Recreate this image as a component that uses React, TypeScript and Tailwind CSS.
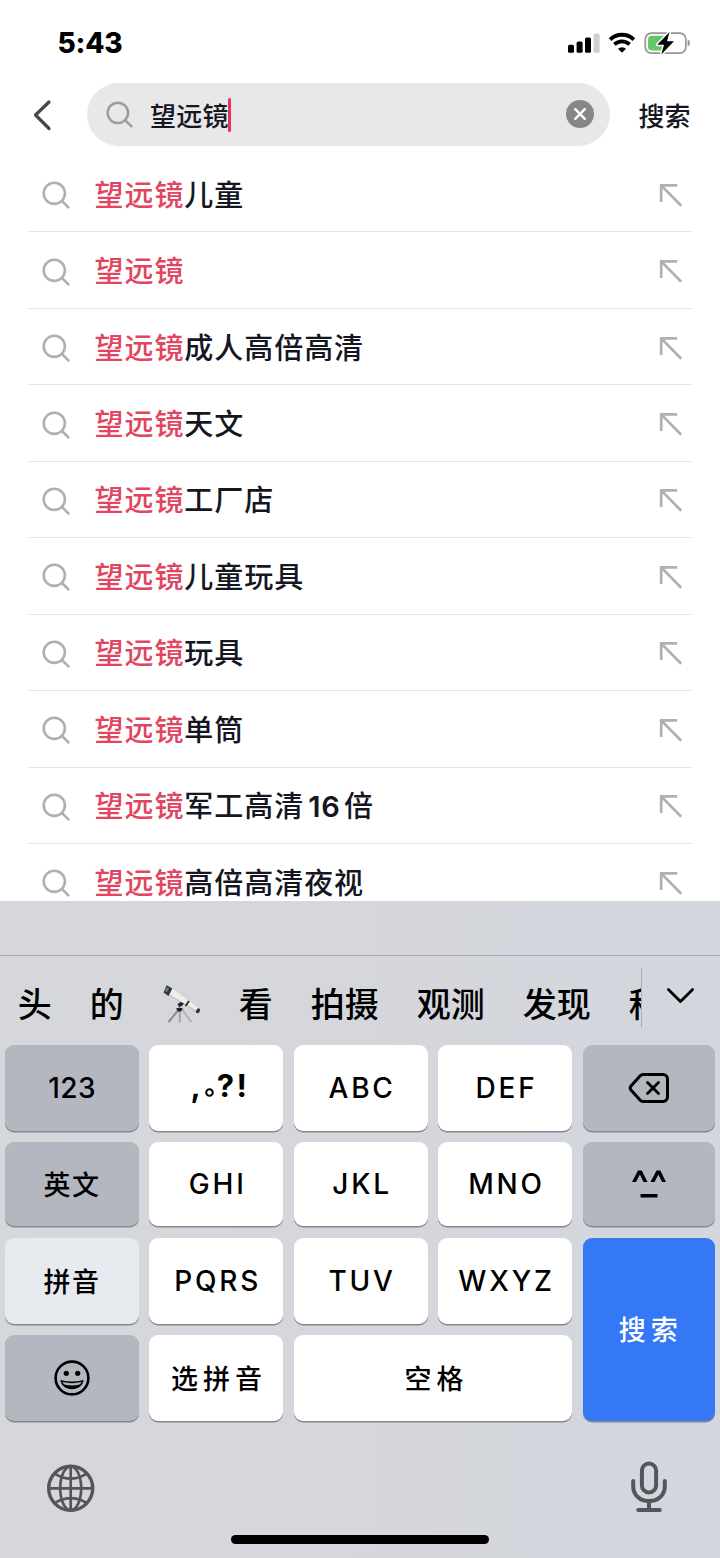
import type { ReactNode } from 'react';

const KEYWORD = '望远镜';

const SUGGESTIONS: ReactNode[] = [
  '儿童',
  '',
  '成人高倍高清',
  '天文',
  '工厂店',
  '儿童玩具',
  '玩具',
  '单筒',
  <>
    军工高清<span className="mr-[3.500px] ml-[4px] font-semibold tracking-[0.8px]">16</span>倍
  </>,
  '高倍高清夜视',
];

function SearchIcon({ className }: { className: string }) {
  return (
    <svg className={className} viewBox="0 0 28 28" fill="none" stroke="currentColor" strokeWidth="2.6" strokeLinecap="round">
      <circle cx="12.3" cy="12.3" r="10.6" />
      <path d="M20 20l6.400 6.400" />
    </svg>
  );
}

function StatusBar() {
  return (
    <div className="flex h-[83px] items-start justify-between pr-[29px] pl-[57.500px]">
      <div className="mt-[26px] font-['Inter'] text-[28px] leading-[34px] font-extrabold tracking-[-0.2px] text-black">5:43</div>
      <svg className="mt-[30px] h-[26px] w-[124px]" viewBox="0 0 124 26">
        <rect x="1" y="14.8" width="6" height="8" rx="1.6" />
        <rect x="9.6" y="11.6" width="6" height="11.2" rx="1.6" />
        <rect x="18" y="7.6" width="6" height="15.2" rx="1.6" />
        <rect x="26.6" y="3.4" width="6" height="19.4" rx="1.6" fill="#cfcfcf" />
        <g fill="none" stroke="#000" strokeWidth="4">
          <path d="M43.2 9.6a17 17 0 0 1 23.6 0" />
          <path d="M47.4 14.4a11 11 0 0 1 15.2 0" strokeWidth="3.8" />
        </g>
        <path d="M55 22.8l-4-4a5.8 5.8 0 0 1 8 0z" />
        <rect x="78.300" y="3.200" width="40.500" height="20" rx="6" fill="none" stroke="#969696" strokeWidth="1.700" />
        <path d="M85 5.8h12.5l-2 14.8H85a4 4 0 0 1-4-4V9.800a4 4 0 0 1 4-4z" fill="#65c766" />
        <path d="M120.600 9.600c3 .9 3 6.100 0 7z" fill="#969696" />
        <path d="M102.500 2L90.300 14.800h6.700L94.300 24.600 107 11.200h-7z" stroke="#fff" strokeWidth="3" strokeLinejoin="round" />
        <path d="M102.500 2L90.300 14.800h6.700L94.300 24.600 107 11.200h-7z" />
      </svg>
    </div>
  );
}

function SearchBar() {
  return (
    <div className="flex h-[63px] items-center">
      <svg className="ml-[32px] h-[32px] w-[20px] shrink-0" viewBox="0 0 20 32" fill="none" stroke="#45464c" strokeWidth="3.200" strokeLinecap="round" strokeLinejoin="round">
        <path d="M17 3L3.500 16 17 29.500" />
      </svg>
      <div className="ml-[35px] flex h-[63px] w-[523px] shrink-0 items-center rounded-full bg-[#e8e8e8] pr-[16px] pl-[19px]">
        <SearchIcon className="h-[27px] w-[27px] text-[#9d9d9d]" />
        <div className="ml-[17px] text-[26px] leading-[38px] font-medium tracking-[0.2px]">{KEYWORD}</div>
        <div className="ml-[-1px] h-[34px] w-[3px] rounded-full bg-[#ea3358]" />
        <svg className="mb-[2px] ml-auto h-[28px] w-[28px]" viewBox="0 0 28 28">
          <circle cx="14" cy="14" r="14" fill="#868686" />
          <path d="M9.200 9.200l9.600 9.600M18.800 9.200l-9.600 9.600" stroke="#fff" strokeWidth="2.400" strokeLinecap="round" />
        </svg>
      </div>
      <div className="ml-[28.500px] text-[26px] leading-[38px] font-medium">搜索</div>
    </div>
  );
}

function SuggestionRow({ rest }: { rest: ReactNode }) {
  return (
    <li className="mx-[28px] flex h-[76.450px] shrink-0 items-center border-b border-[#e4e4e6] pt-[2px] pr-[9px] pl-[14px]">
      <SearchIcon className="mt-[1px] h-[28px] w-[28px] text-[#b0b0b0]" />
      <div className="mt-[2px] ml-[24.500px] text-[29px] leading-[40px] font-medium tracking-[0.950px] whitespace-nowrap">
        <span className="text-[#e2455f]">{KEYWORD}</span>
        {rest}
      </div>
      <svg className="ml-auto h-[24px] w-[24px]" viewBox="0 0 24 24" fill="none" stroke="#b0b0b0" strokeWidth="2.700">
        <path d="M18.200 2.400H2.200V19M2.200 2.400l20 20.300" />
      </svg>
    </li>
  );
}

function TelescopeIcon() {
  return (
    <svg className="mt-[1px] h-[40px] w-[40px] shrink-0" viewBox="0 0 40 40">
      <g stroke="#8b8d90" strokeWidth="2" strokeLinecap="round">
        <path d="M15.500 27L7 37.500" />
        <path d="M17.800 27v10.500" stroke="#a3a5a8" />
        <path d="M20.500 26l8.500 11.500" stroke="#b0b2b5" />
      </g>
      <path d="M9 3.500L37 24.500l-2.500 4.500L5 10.500z" fill="#efeee8" />
      <path d="M6 9.500L35.500 27l-1 2L5 10.800z" fill="#c9c8c2" />
      <path d="M27 17l-3.500 5" stroke="#252729" strokeWidth="1.800" />
      <path d="M15.500 20l3-2 3.500 1.500-2 2.500-3 1zM14 24.500l3.500-1 3.500 1-2 3h-3z" fill="#232528" />
      <path d="M4.500 1.300l5.900 3.200-3.900 7.600L1.500 8.500z" fill="#30383f" />
      <path d="M4.200 3l2.800 1.500-2 3.800-2-1.300z" fill="#66798a" />
      <ellipse cx="36" cy="26.800" rx="1.800" ry="2.600" transform="rotate(30 36 26.800)" fill="#303236" />
    </svg>
  );
}

function Candidates() {
  return (
    <div className="flex h-[89px] items-start">
      <div className="flex h-[89px] w-[641px] shrink-0 items-center gap-[38px] overflow-hidden pt-[5px] pl-[17.700px] text-[34px] leading-[50px] font-medium whitespace-nowrap text-black">
        <span>头</span>
        <span>的</span>
        <TelescopeIcon />
        <span className="-ml-[1px]">看</span>
        <span>拍摄</span>
        <span>观测</span>
        <span>发现</span>
        <span>科</span>
      </div>
      <div className="mt-[12px] h-[59px] w-px bg-[#a9abb1]" />
      <svg className="mt-[30px] ml-[24px] h-[20px] w-[30px]" viewBox="0 0 30 20" fill="none" stroke="#000" strokeWidth="2.800" strokeLinecap="round" strokeLinejoin="round">
        <path d="M2.400 3.400L14.500 15.600 26.600 3.400" />
      </svg>
    </div>
  );
}

const KEY = 'flex items-center justify-center rounded-[9px] text-black shadow-[0_1.5px_0_#86888d]';
const WHITE = 'bg-white';
const GRAY = 'bg-[#b4b6c0]';

function Key({ className, children }: { className: string; children: ReactNode }) {
  return <button className={`${KEY} ${className}`}>{children}</button>;
}

function Letters({ children }: { children: string }) {
  return (
    <Key className={WHITE}>
      <span className="pl-[2.500px] font-['Inter'] text-[28px] leading-[36px] font-medium tracking-[2.800px]">{children}</span>
    </Key>
  );
}

function Keypad() {
  return (
    <div className="grid grid-cols-[134px_134px_134px_134px_132px] grid-rows-[85.500px_84px_85.500px_85.300px] gap-x-[10.400px] gap-y-[11.800px] pl-[5.100px]">
      <Key className={GRAY}>
        <span className="font-['Inter'] text-[28px] leading-[36px] font-medium tracking-[0.400px]">123</span>
      </Key>
      <Key className={WHITE}>
        <span className="flex items-baseline pb-[3px] pl-[7px] font-['Inter'] text-[31px] leading-[36px] font-bold">
          <span>,</span>
          <svg className="mr-[3px] ml-[4px] h-[9px] w-[9px]" viewBox="0 0 9 9" fill="none" stroke="#000" strokeWidth="2">
            <circle cx="4.500" cy="4.500" r="3.300" />
          </svg>
          <span className="tracking-[2.500px]">?!</span>
        </span>
      </Key>
      <Letters>ABC</Letters>
      <Letters>DEF</Letters>
      <Key className={GRAY}>
        <svg className="h-[32px] w-[42px]" viewBox="0 0 42 32" fill="none" stroke="#000" strokeWidth="3" strokeLinejoin="round" strokeLinecap="round">
          <path d="M15 2.500h20a4.500 4.500 0 0 1 4.500 4.500v18a4.500 4.500 0 0 1-4.500 4.500H15a4 4 0 0 1-2.800-1.200L3 18q-1.600-2 0-4l9.200-10.300A4 4 0 0 1 15 2.500z" />
          <path d="M19.500 10.500l11 11M30.500 10.500l-11 11" strokeWidth="2.800" />
        </svg>
      </Key>

      <Key className={GRAY}>
        <span className="text-[27px] leading-[36px] font-medium tracking-[1.500px]">英文</span>
      </Key>
      <Letters>GHI</Letters>
      <Letters>JKL</Letters>
      <Letters>MNO</Letters>
      <Key className={GRAY}>
        <svg className="h-[30px] w-[36px]" viewBox="0 0 36 30">
          <path d="M1 13L7 1.500h3.800L16.500 13h-4L8.900 5.500 5 13zM19.500 13l6-11.500h3.800L35 13h-4l-3.600-7.500L23.500 13zM9.500 25h17v3.600h-17z" />
        </svg>
      </Key>

      <Key className="bg-[#e7ebef]">
        <span className="text-[27px] leading-[36px] font-medium tracking-[1.500px]">拼音</span>
      </Key>
      <Letters>PQRS</Letters>
      <Letters>TUV</Letters>
      <Letters>WXYZ</Letters>
      <Key className="row-span-2 bg-[#3478f5]">
        <span className="pl-[4px] text-[27px] leading-[36px] font-medium tracking-[5px] text-white">搜索</span>
      </Key>

      <Key className={GRAY}>
        <svg className="mb-[1px] h-[36px] w-[36px]" viewBox="0 0 36 36">
          <circle cx="18" cy="18" r="16.400" fill="none" stroke="#000" strokeWidth="2.600" />
          <circle cx="12.300" cy="13.300" r="2.600" />
          <circle cx="23.700" cy="13.300" r="2.600" />
          <path d="M6.500 20q11.500 3 23 0c0 5-5.500 9.300-11.500 9.300S6.500 25 6.500 20z" />
          <path d="M8.500 22.100q9.500 2.300 19 0c-.6 1.700-1.300 2.300-2.700 2.700q-6.800 1.400-13.600 0c-1.400-.4-2.100-1-2.700-2.700z" fill="#b4b6c0" />
        </svg>
      </Key>
      <Key className={WHITE}>
        <span className="pl-[5px] text-[27px] leading-[36px] font-medium tracking-[5px]">选拼音</span>
      </Key>
      <Key className="col-span-2 bg-white">
        <span className="pl-[7px] text-[27px] leading-[36px] font-medium tracking-[5px]">空格</span>
      </Key>
    </div>
  );
}

function KeyboardFooter() {
  return (
    <div className="flex flex-1 flex-col">
      <div className="flex h-[114.500px] items-center justify-between pt-[20px] pr-[52px] pl-[46px]">
        <svg className="h-[50px] w-[50px]" viewBox="0 0 50 50" fill="none" stroke="#54565b" strokeWidth="2.700">
          <circle cx="24.700" cy="25.300" r="22" strokeWidth="3.400" />
          <ellipse cx="24.700" cy="25.300" rx="10.500" ry="22" />
          <path d="M24.700 3.300v44M2.700 25.300h44M9 10.800q15.700 9.500 31.400 0M9 39.800q15.700-9.500 31.400 0" />
        </svg>
        <svg className="mb-[4px] h-[54px] w-[38px]" viewBox="0 0 38 54" fill="none" stroke="#54565b" strokeWidth="4" strokeLinecap="round">
          <rect x="11.900" y="4.500" width="14.200" height="29" rx="7.100" />
          <path d="M3.200 22v5.500C3.200 36 10 42 19 42s15.800-6 15.800-14.500V22M19 42v8M8.200 51h21.600" />
        </svg>
      </div>
      <div className="mx-auto h-[9px] w-[258px] shrink-0 rounded-full bg-black" />
    </div>
  );
}

export default function App() {
  return (
    <div className="flex h-[1558px] w-[720px] flex-col overflow-hidden bg-white font-['Noto_Sans_CJK_SC',sans-serif] text-[#15161f]">
      <StatusBar />
      <SearchBar />
      <ul className="flex h-[755px] shrink-0 flex-col overflow-hidden pt-[10px] font-['Inter','Noto_Sans_CJK_SC',sans-serif]">
        {SUGGESTIONS.map((rest, i) => (
          <SuggestionRow key={i} rest={rest} />
        ))}
      </ul>
      <section className="flex flex-1 flex-col bg-linear-to-r from-[#d6d7db] to-[#d3d6dd]">
        <div className="h-[55px] border-b border-[#a5a9b0]" />
        <Candidates />
        <Keypad />
        <KeyboardFooter />
      </section>
    </div>
  );
}
